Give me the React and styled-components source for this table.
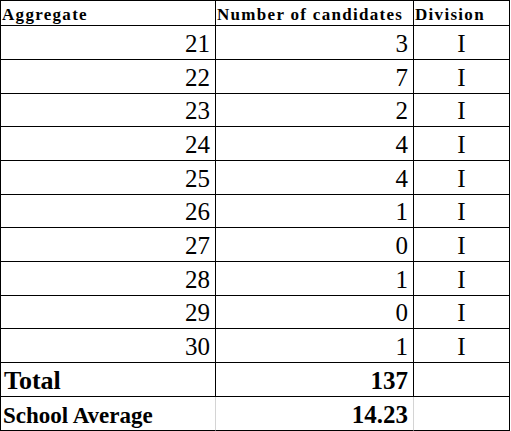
import React from "react";
import styled, { createGlobalStyle, css } from "styled-components";

const Global = createGlobalStyle`
  html, body { margin: 0; padding: 0; background: #ffffff; }
  body { font-family: "Liberation Serif", "Times New Roman", serif; color: #000; }
`;

const Sheet = styled.div`
  display: grid;
  grid-template-columns: 215px 198px 96px;
  grid-template-rows: 25px 34px 34px 33px 34px 34px 33px 34px 34px 33px 34px 34px 34px;
  border-top: 1px solid #000;
  border-left: 1px solid #000;
  width: max-content;
  font-family: "Liberation Serif", "Times New Roman", serif;
`;

const Cell = styled.div`
  box-sizing: border-box;
  display: flex;
  align-items: flex-end;
  font-family: "Liberation Serif", "Times New Roman", serif;
  line-height: 1;
  white-space: nowrap;
  color: #000;
  border-right: 1px solid ${(p) => (p.$faint ? "#d4d4d4" : "#000")};
  border-bottom: 1px solid #000;
  padding: 0 5px 3px 5px;
  justify-content: ${(p) =>
    p.$align === "right" ? "flex-end" : p.$align === "center" ? "center" : "flex-start"};
  ${(p) =>
    p.$kind === "head" &&
    css`
      font-weight: bold;
      font-size: 17px;
      letter-spacing: 1.3px;
      padding-left: 1px;
      padding-bottom: 2px;
    `}
  ${(p) =>
    p.$kind === "data" &&
    css`
      font-size: 25px;
      padding-bottom: 3px;
    `}
  ${(p) =>
    p.$kind === "total" &&
    css`
      font-weight: bold;
      font-size: 26px;
      padding-left: 3px;
      padding-bottom: 2px;
    `}
  ${(p) =>
    p.$kind === "num" &&
    css`
      font-weight: bold;
      font-size: 25px;
      padding-bottom: 3px;
    `}
  ${(p) =>
    p.$kind === "avg" &&
    css`
      font-weight: bold;
      font-size: 23px;
      padding-left: 2px;
      padding-bottom: 3px;
    `}
`;

const rows = [
  [21, 3],
  [22, 7],
  [23, 2],
  [24, 4],
  [25, 4],
  [26, 1],
  [27, 0],
  [28, 1],
  [29, 0],
  [30, 1],
];

export default function App() {
  return (
    <>
      <Global />
      <Sheet>
        <Cell $kind="head">Aggregate</Cell>
        <Cell $kind="head">Number of candidates</Cell>
        <Cell $kind="head">Division</Cell>
        {rows.map(([agg, n]) => (
          <React.Fragment key={agg}>
            <Cell $kind="data" $align="right">{agg}</Cell>
            <Cell $kind="data" $align="right">{n}</Cell>
            <Cell $kind="data" $align="center">I</Cell>
          </React.Fragment>
        ))}
        <Cell $kind="total">Total</Cell>
        <Cell $kind="num" $align="right">137</Cell>
        <Cell $kind="num" />
        <Cell $kind="avg" $faint>School Average</Cell>
        <Cell $kind="num" $align="right" $faint>14.23</Cell>
        <Cell $kind="num" />
      </Sheet>
    </>
  );
}
